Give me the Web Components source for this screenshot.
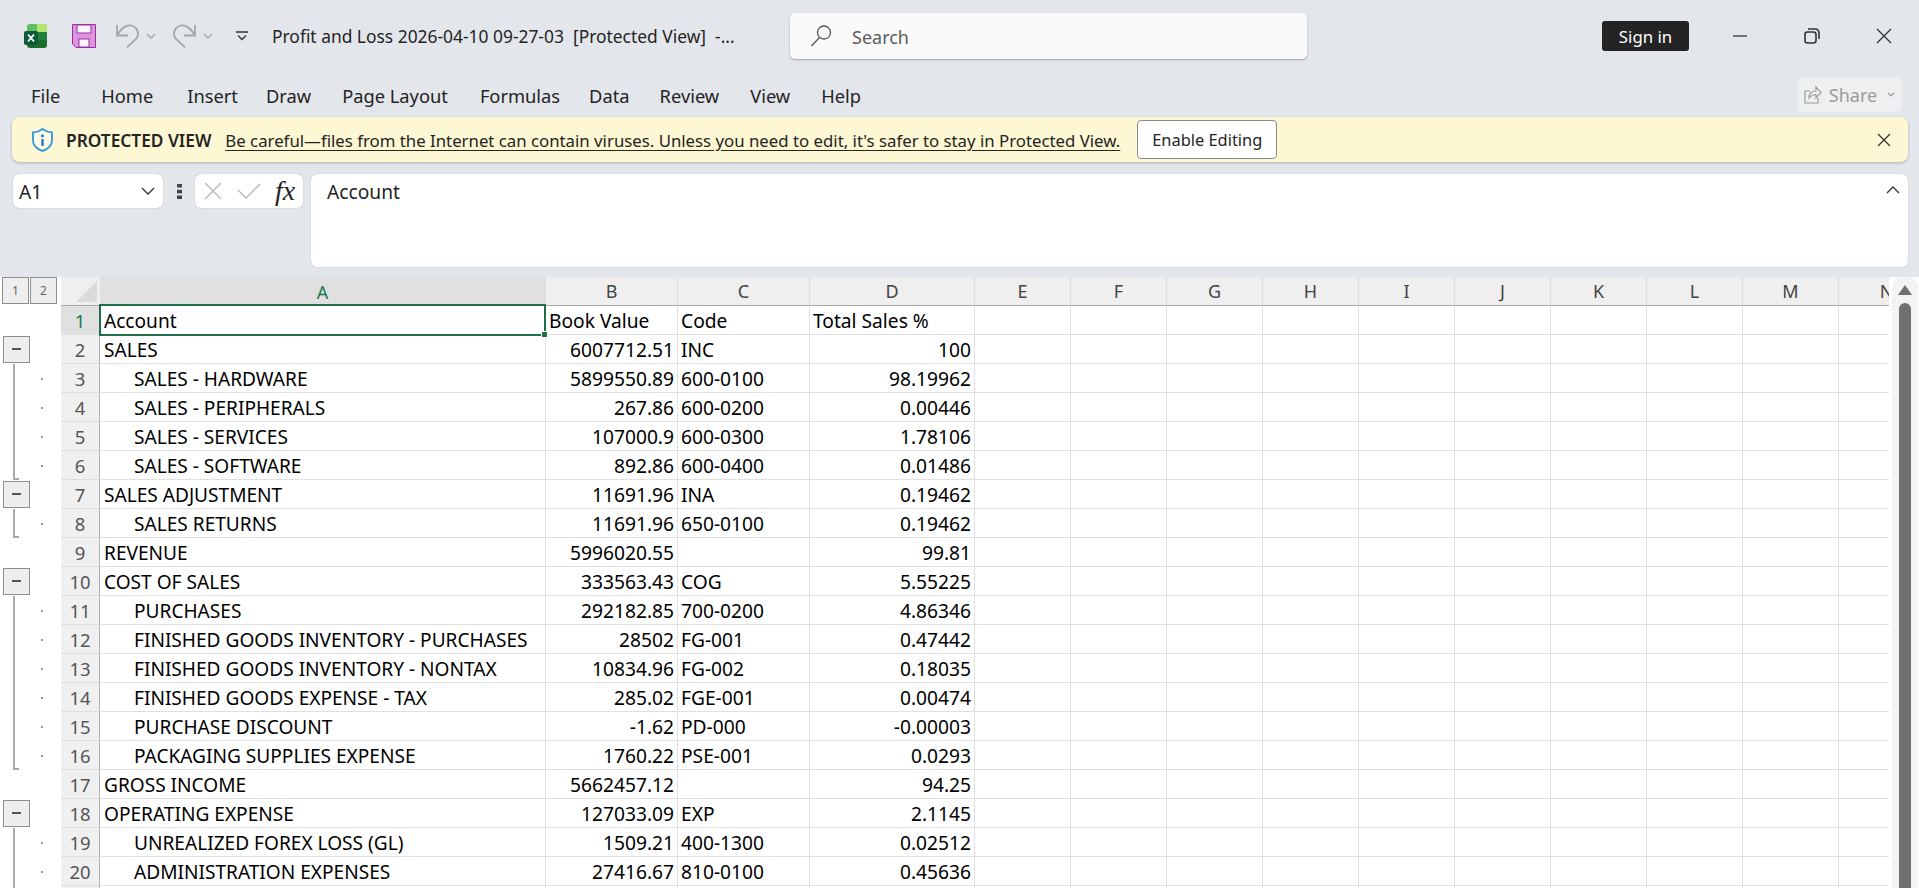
<!DOCTYPE html>
<html>
<head>
<meta charset="utf-8">
<title>Profit and Loss</title>
<style>
    html, body { margin: 0; height: 888px; overflow: hidden; }
    body { background: #e3e6eb; color: #242424; font-family: "Noto Sans", "Open Sans", sans-serif; }
</style>
</head>
<body>
<title-bar></title-bar>
<ribbon-tabs></ribbon-tabs>
<protected-bar></protected-bar>
<formula-bar></formula-bar>
<sheet-view></sheet-view>

<script>
class TitleBar extends HTMLElement {
    constructor() {
        super();
        this.attachShadow({ mode: 'open' }).innerHTML = `
            <style>
                :host { display: flex; align-items: center; height: 72px; box-sizing: border-box; padding-left: 24px; }
                svg { display: block; flex: none; }
                .title { margin-left: 24px; width: 500px; font-size: 17.400px; white-space: pre; }
                .search {
                    margin-left: 18px; width: 517px; height: 46px; box-sizing: border-box; background: #fafafa;
                    border-radius: 5px; box-shadow: 0 1px 2px rgba(0,0,0,.3); display: flex; align-items: center;
                    padding-left: 20px; color: #5c5c5c; font-size: 18px;
                }
                .search span { margin-left: 18px; padding-top: 1px; }
                .signin {
                    margin-left: 295px; width: 87px; height: 30px; background: #242424; color: #fff; border-radius: 3px;
                    font-size: 16.800px; display: flex; align-items: center; justify-content: center;
                }
                .min { margin-left: 43px; }
                .restore { margin-left: 56px; }
                .close { margin-left: 56px; }
            </style>
            <svg width="24" height="24" viewBox="0 0 24 24">
                <path d="M3 3a3 3 0 0 1 3-3h7v8H3z" fill="#5cc163"/>
                <path d="M13 0h8a2 2 0 0 1 2 2v6H13z" fill="#b3e46c"/>
                <path d="M3 8h20v8H3z" fill="#2f8c3f"/>
                <path d="M3 16h20v5a3 3 0 0 1-3 3H6a3 3 0 0 1-3-3z" fill="#1d6b2f"/>
                <path d="M13 8h10v8H13z" fill="#21803f"/>
                <rect x="0" y="7" width="14" height="14" rx="2" fill="#0e5a3a"/>
                <path d="M4 10.500l6 7M10 10.500l-6 7" stroke="#fff" stroke-width="1.900"/>
            </svg>
            <svg style="margin-left:24px" width="24" height="24" viewBox="0 0 24 24">
                <path d="M.5.5h23v23H4L.5 20z" fill="#dc94dc" stroke="#9c2ea5"/>
                <rect x="5" y="1" width="14" height="8" fill="#fbf6fb" stroke="#9c2ea5"/>
                <rect x="7" y="15" width="10" height="8" fill="#fbf6fb" stroke="#9c2ea5"/>
            </svg>
            <svg style="margin-left:20px" width="23" height="24" viewBox="0 0 23 24" fill="none" stroke="#a6a6a6" stroke-width="1.800">
                <path d="M1 1v10.500h11"/>
                <path d="M2 10C6 3 12 0 17 2c5 2.500 6.500 8.500 3 13l-9 8.500"/>
            </svg>
            <svg style="margin-left:7px" width="10" height="6" viewBox="0 0 10 6" fill="none" stroke="#a6a6a6" stroke-width="1.400"><path d="M1 1l4 4 4-4"/></svg>
            <svg style="margin-left:17px" width="23" height="24" viewBox="0 0 23 24" fill="none" stroke="#a6a6a6" stroke-width="1.800">
                <path d="M22 1v10.500H11"/>
                <path d="M21 10C17 3 11 0 6 2 1 4.500-.5 10.500 3 15l9 8.500"/>
            </svg>
            <svg style="margin-left:7px" width="10" height="6" viewBox="0 0 10 6" fill="none" stroke="#a6a6a6" stroke-width="1.400"><path d="M1 1l4 4 4-4"/></svg>
            <svg style="margin-left:23px" width="12" height="10" viewBox="0 0 12 10" fill="none" stroke="#333" stroke-width="1.400"><path d="M0 1h12M2 4.500l4 4 4-4"/></svg>
            <div class="title">Profit and Loss 2026-04-10 09-27-03  [Protected View]  -...</div>
            <div class="search">
                <svg width="24" height="22" viewBox="0 0 24 22" fill="none" stroke="#555" stroke-width="1.300"><circle cx="14" cy="7.500" r="6.500"/><path d="M9.500 12.500L1.500 21"/></svg>
                <span>Search</span>
            </div>
            <div class="signin">Sign in</div>
            <svg class="min" width="16" height="2" viewBox="0 0 16 2"><path d="M1 1h14" stroke="#333" stroke-width="1.300"/></svg>
            <svg class="restore" width="16" height="16" viewBox="0 0 16 16" fill="none" stroke="#333" stroke-width="1.600"><rect x="1" y="4" width="11" height="11" rx="2.500"/><path d="M4 1h7.500a3.500 3.500 0 0 1 3.500 3.500V11"/></svg>
            <svg class="close" width="16" height="16" viewBox="0 0 16 16" stroke="#333" stroke-width="1.300"><path d="M1 1l14 14M15 1L1 15"/></svg>
        `;
    }
}

class RibbonTabs extends HTMLElement {
    constructor() {
        super();
        const tabs = ['Home', 'Insert', 'Draw', 'Page Layout', 'Formulas', 'Data', 'Review', 'View', 'Help'];
        this.attachShadow({ mode: 'open' }).innerHTML = `
            <style>
                :host { display: flex; align-items: center; height: 45px; box-sizing: border-box; padding-left: 31px; font-size: 18.300px; }
                .tabs { display: flex; gap: 31px; margin-left: 41px; flex: 1; padding-top: 2px; }
                .tabs span:nth-child(2) { margin-left: 3px; }
                .tabs span:nth-child(3) { margin-left: -3px; }
                .tabs span:nth-child(5) { margin-left: 1px; }
                .tabs span:nth-child(6) { margin-left: -2px; }
                .tabs span:nth-child(7) { margin-left: -1px; }
                .file { padding-top: 2px; }
                .share {
                    margin-right: 17px; width: 105px; height: 34px; box-sizing: border-box; background: #eeeff1;
                    border-radius: 5px; color: #9b9b9b; display: flex; align-items: center; justify-content: center; gap: 7px; font-size: 18px;
                }
            </style>
            <span class="file">File</span>
            <div class="tabs">${tabs.map(t => `<span>${t}</span>`).join('')}</div>
            <div class="share">
                <svg width="18" height="19" viewBox="0 0 18 19" fill="none" stroke="#9b9b9b" stroke-width="1.200"><path d="M6 6H1v12h13v-5"/><path d="M5 13c0-5 3-7 7-7V2l5 5.500L12 13V9.500c-3 0-5 1-7 3.500z"/></svg>
                <span>Share</span>
                <svg style="margin-left:3px" width="8" height="5" viewBox="0 0 8 5" fill="none" stroke="#9b9b9b" stroke-width="1.200"><path d="M1 1l3 3 3-3"/></svg>
            </div>
        `;
    }
}

class ProtectedBar extends HTMLElement {
    constructor() {
        super();
        this.attachShadow({ mode: 'open' }).innerHTML = `
            <style>
                :host {
                    display: flex; align-items: center; height: 45px; box-sizing: border-box; margin: 0 11px 0 12px; padding-left: 20px;
                    background: #fdf7d3; border-radius: 8px; box-shadow: 0 1px 3px rgba(0,0,0,.25); font-size: 16.800px; white-space: pre;
                }
                svg { flex: none; display: block; }
                b { margin-left: 13px; font-weight: 600; font-size: 17.300px; padding-top: 1px; }
                u { margin-left: 14px; text-underline-offset: 3px; padding-top: 1px; }
                .btn {
                    margin-left: 17px; width: 140px; height: 39px; box-sizing: border-box; background: #fff; border: 1px solid #8a8a8a;
                    border-radius: 4px; display: flex; align-items: center; justify-content: center; font-size: 16.400px;
                }
                .close { margin-left: auto; margin-right: 16px; }
            </style>
            <svg width="21" height="24" viewBox="0 0 21 24">
                <path d="M10.500 1c3 2.300 5.500 3.300 9.500 3.500V12c0 5.500-3.500 9-9.500 11C4.500 21 1 17.500 1 12V4.500C5 4.300 7.500 3.300 10.500 1z" fill="#fbfbe6" stroke="#3a98dc" stroke-width="1.900"/>
                <circle cx="10.500" cy="8" r="1.400" fill="#1172c4"/>
                <path d="M10.500 11v7" stroke="#1172c4" stroke-width="2.200"/>
            </svg>
            <b>PROTECTED VIEW</b>
            <u>Be careful—files from the Internet can contain viruses. Unless you need to edit, it's safer to stay in Protected View.</u>
            <div class="btn">Enable Editing</div>
            <svg class="close" width="16" height="16" viewBox="0 0 16 16" stroke="#333" stroke-width="1.300"><path d="M2 2l12 12M14 2L2 14"/></svg>
        `;
    }
}

class FormulaBar extends HTMLElement {
    constructor() {
        super();
        this.attachShadow({ mode: 'open' }).innerHTML = `
            <style>
                :host { display: flex; align-items: flex-start; margin: 12px 11px 10px 13px; height: 93px; font-size: 19.200px; }
                svg { display: block; flex: none; }
                .box { background: #fff; border-radius: 6px; box-shadow: 0 0 1px rgba(0,0,0,.35); display: flex; align-items: center; box-sizing: border-box; }
                .name { width: 150px; height: 34px; padding: 0 8px 0 6px; justify-content: space-between; }
                .name span { padding-top: 1px; }
                .dots { width: 32px; height: 34px; display: flex; align-items: center; justify-content: center; }
                .fx { width: 108px; height: 34px; padding-left: 9px; }
                .fx i { font: italic 28px "Liberation Serif", serif; margin-left: 14px; }
                .input { margin-left: 8px; flex: 1; height: 93px; padding: 0 8px 0 16px; align-items: flex-start; justify-content: space-between; line-height: 36px; }
                .input svg { margin-top: 12px; }
            </style>
            <div class="box name">
                <span>A1</span>
                <svg width="14" height="8" viewBox="0 0 14 8" fill="none" stroke="#333" stroke-width="1.300"><path d="M1 1l6 6 6-6"/></svg>
            </div>
            <div class="dots"><svg width="5" height="15" viewBox="0 0 5 15" fill="#444"><rect x="0" y="0" width="5" height="3.500"/><rect x="0" y="5.800" width="5" height="3.500"/><rect x="0" y="11.500" width="5" height="3.500"/></svg></div>
            <div class="box fx">
                <svg width="18" height="18" viewBox="0 0 18 18" fill="none" stroke="#b8b8b8" stroke-width="1.400"><path d="M1 1l16 16M17 1L1 17"/></svg>
                <svg style="margin-left:15px" width="24" height="16" viewBox="0 0 24 16" fill="none" stroke="#b8b8b8" stroke-width="1.400"><path d="M1 7l8 8L23 1"/></svg>
                <i>fx</i>
            </div>
            <div class="box input">
                <span>Account</span>
                <svg width="14" height="8" viewBox="0 0 14 8" fill="none" stroke="#333" stroke-width="1.300"><path d="M1 7l6-6 6 6"/></svg>
            </div>
        `;
    }
}

const COL_WIDTHS = [446, 132, 132, 165, 96, 96, 96, 96, 96, 96, 96, 96, 96, 96];
const COL_NAMES = 'ABCDEFGHIJKLMN'.split('');

// outline: m = minus box, d = dot with bracket line, e = dot where the bracket ends
const ROWS = [
    ['', 'Account', 'Book Value', 'Code', 'Total Sales %'],
    ['m', 'SALES', '6007712.51', 'INC', '100'],
    ['d', '>SALES - HARDWARE', '5899550.89', '600-0100', '98.19962'],
    ['d', '>SALES - PERIPHERALS', '267.86', '600-0200', '0.00446'],
    ['d', '>SALES - SERVICES', '107000.9', '600-0300', '1.78106'],
    ['e', '>SALES - SOFTWARE', '892.86', '600-0400', '0.01486'],
    ['m', 'SALES ADJUSTMENT', '11691.96', 'INA', '0.19462'],
    ['e', '>SALES RETURNS', '11691.96', '650-0100', '0.19462'],
    ['', 'REVENUE', '5996020.55', '', '99.81'],
    ['m', 'COST OF SALES', '333563.43', 'COG', '5.55225'],
    ['d', '>PURCHASES', '292182.85', '700-0200', '4.86346'],
    ['d', '>FINISHED GOODS INVENTORY - PURCHASES', '28502', 'FG-001', '0.47442'],
    ['d', '>FINISHED GOODS INVENTORY - NONTAX', '10834.96', 'FG-002', '0.18035'],
    ['d', '>FINISHED GOODS EXPENSE - TAX', '285.02', 'FGE-001', '0.00474'],
    ['d', '>PURCHASE DISCOUNT', '-1.62', 'PD-000', '-0.00003'],
    ['e', '>PACKAGING SUPPLIES EXPENSE', '1760.22', 'PSE-001', '0.0293'],
    ['', 'GROSS INCOME', '5662457.12', '', '94.25'],
    ['m', 'OPERATING EXPENSE', '127033.09', 'EXP', '2.1145'],
    ['d', '>UNREALIZED FOREX LOSS (GL)', '1509.21', '400-1300', '0.02512'],
    ['d', '>ADMINISTRATION EXPENSES', '27416.67', '810-0100', '0.45636']
];

class SheetView extends HTMLElement {
    constructor() {
        super();
        const track = `61px 39px ${COL_WIDTHS.map(w => w + 'px').join(' ')}`;
        let rows = '';
        ROWS.forEach((row, i) => {
            const [outline, account, book, code, pct] = row;
            const indent = account.startsWith('>');
            let cells = '';
            COL_WIDTHS.forEach((w, c) => {
                let text = '', cls = 'cell';
                if (c === 0) { text = indent ? account.slice(1) : account; cls += ' wide'; if (indent) cls += ' indent'; }
                if (c === 1) { text = book; if (i > 0) cls += ' num'; }
                if (c === 2) text = code;
                if (c === 3) { text = pct; if (i > 0) cls += ' num'; }
                cells += `<div class="${cls}">${text}</div>`;
            });
            const mark = outline === 'm' ? '<span class="minus"></span>' : outline ? '<span class="dot"></span>' : '';
            rows += `
                <div class="row">
                    <div class="outline ${outline}">${mark}</div>
                    <div class="rowhead${i === 0 ? ' active' : ''}">${i + 1}</div>
                    ${cells}
                </div>`;
        });
        // row 21 only peeks in at the bottom edge, so it has lines but no label
        const lastRow = `
            <div class="row">
                <div class="outline d"><span class="dot"></span></div>
                <div class="rowhead"></div>
                ${COL_WIDTHS.map(() => '<div class="cell"></div>').join('')}
            </div>`;
        this.attachShadow({ mode: 'open' }).innerHTML = `
            <style>
                :host { display: flex; height: 611px; overflow: hidden; background: #fff; color: #000; font-size: 19.200px; }
                .grid { position: relative; width: 1889px; flex: none; overflow: hidden; }
                .row { display: grid; grid-template-columns: ${track}; height: 29px; }
                .head { display: grid; grid-template-columns: ${track}; height: 29px; }
                .levels { display: flex; gap: 1px; padding-left: 2px; }
                .levels span {
                    width: 27px; height: 27px; box-sizing: border-box; background: #eee; border: 1px solid #8e8e8e;
                    display: flex; align-items: center; justify-content: center; font-size: 12px; color: #666;
                }
                .corner { background: #efefef; position: relative; border-bottom: 1px solid #a8a8a8; box-sizing: border-box; }
                .corner::after {
                    content: ''; position: absolute; left: 15px; bottom: 3px; border-style: solid; border-width: 0 0 21px 21px;
                    border-color: transparent transparent #dadada transparent;
                }
                .colhead {
                    background: #efefef; border-right: 1px solid #dcdcdc; border-bottom: 1px solid #a8a8a8; box-sizing: border-box;
                    display: flex; align-items: center; justify-content: center; color: #444; font-size: 18px; overflow: hidden;
                }
                .colhead.active { background: #e0e0e0; color: #1c7a4a; border-bottom: 0; }
                .outline { position: relative; }
                .minus {
                    position: absolute; left: 3px; top: 1px; width: 27px; height: 27px; box-sizing: border-box;
                    background: #eee; border: 1px solid #8e8e8e;
                }
                .minus::after { content: ''; position: absolute; left: 8px; top: 11px; width: 9px; height: 2px; background: #555; }
                .dot { position: absolute; left: 41px; top: 14px; width: 2px; height: 2px; background: #999; }
                .outline.d::before, .outline.e::before { content: ''; position: absolute; left: 13px; top: 0; bottom: 0; width: 2px; background: #ababab; }
                .outline.e::after { content: ''; position: absolute; left: 13px; bottom: 0; width: 6px; height: 2px; background: #ababab; }
                .rowhead {
                    background: #f0f0f0; border-right: 1px solid #b0b0b0; border-bottom: 1px solid #dedede; box-sizing: border-box;
                    display: flex; align-items: center; justify-content: center; color: #555; font-size: 18.500px;
                }
                .rowhead.active { background: #e0e0e0; color: #1c7a4a; }
                .cell {
                    border-right: 1px solid #e0e0e0; border-bottom: 1px solid #e0e0e0; box-sizing: border-box; padding: 0 3px 0 3px;
                    display: flex; align-items: center; white-space: nowrap; min-width: 0;
                }
                .wide { font-size: 19.100px; padding-left: 4px; padding-top: 2px; }
                .indent { padding-left: 34px; }
                .num { justify-content: flex-end; }
                .selection {
                    position: absolute; left: 99px; top: 27px; width: 447px; height: 32px; box-sizing: border-box;
                    border: 2px solid #1f7048; pointer-events: none;
                }
                .selection::after {
                    content: ''; position: absolute; right: -4px; bottom: -4px; width: 5px; height: 5px; background: #1f7048; border: 1px solid #fff;
                }
                .scroll {
                    flex: none; width: 26px; margin-left: 3px; background: #f3f3f3; border-radius: 10px 10px 0 0;
                    display: flex; flex-direction: column; align-items: center; padding-top: 8px; box-sizing: border-box;
                }
                .scroll .up { width: 0; height: 0; border-style: solid; border-width: 0 7px 10px 7px; border-color: transparent transparent #6f6f6f transparent; }
                .scroll .thumb { width: 12px; flex: 1; margin-top: 8px; background: #707070; border-radius: 6px 6px 0 0; }
            </style>
            <div class="grid">
                <div class="head">
                    <div class="levels"><span>1</span><span>2</span></div>
                    <div class="corner"></div>
                    ${COL_NAMES.map((n, i) => `<div class="colhead${i === 0 ? ' active' : ''}">${n}</div>`).join('')}
                </div>
                ${rows}
                ${lastRow}
                <div class="selection"></div>
            </div>
            <div class="scroll"><div class="up"></div><div class="thumb"></div></div>
        `;
    }
}

customElements.define('title-bar', TitleBar);
customElements.define('ribbon-tabs', RibbonTabs);
customElements.define('protected-bar', ProtectedBar);
customElements.define('formula-bar', FormulaBar);
customElements.define('sheet-view', SheetView);
</script>
</body>
</html>
